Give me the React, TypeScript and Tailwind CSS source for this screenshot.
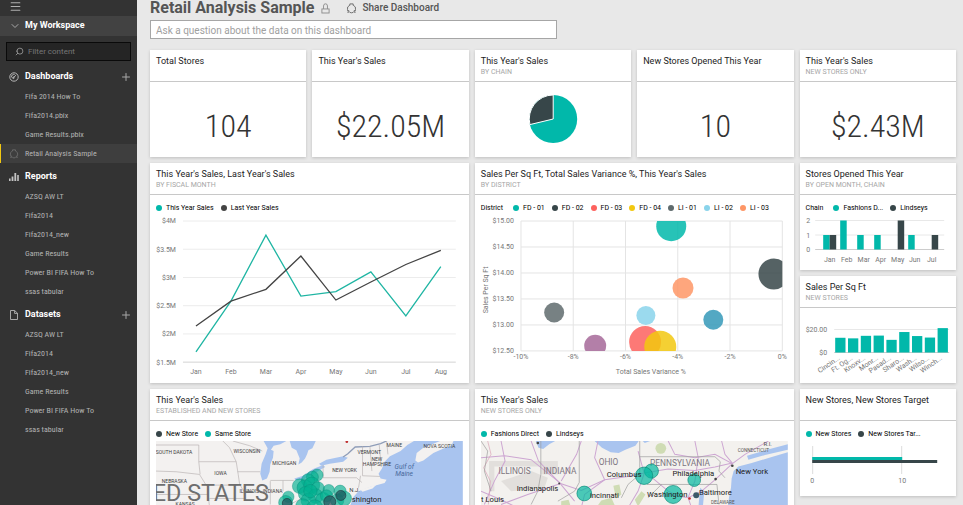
import type { ReactNode } from 'react';
import { ChevronDown, Menu, Plus, Search } from 'lucide-react';

const TEAL = '#01b8aa';
const DARK = '#374649';
const MONTHS = ['Jan', 'Feb', 'Mar', 'Apr', 'May', 'Jun', 'Jul', 'Aug'];

const REPORTS = ['AZSQ AW LT', 'Fifa2014', 'Fifa2014_new', 'Game Results', 'Power BI FIFA How To', 'ssas tabular'];
const DASHBOARDS = ['Fifa 2014 How To', 'Fifa2014.pbix', 'Game Results.pbix', 'Retail Analysis Sample'];

const THIS_YEAR = [1.68, 2.58, 3.75, 2.67, 2.75, 3.1, 2.32, 3.19];
const LAST_YEAR = [2.14, 2.58, 2.79, 3.38, 2.6, 2.92, 3.23, 3.48];

const BUBBLES = [
  { x: -4.25, y: 14.9, r: 15, color: '#01b8aa' },
  { x: -0.32, y: 13.98, r: 15.5, color: '#374649' },
  { x: -3.8, y: 13.71, r: 10.5, color: '#fe9666' },
  { x: -8.73, y: 13.24, r: 10, color: '#5f6b6d' },
  { x: -5.22, y: 13.18, r: 9.5, color: '#8ad4eb' },
  { x: -2.64, y: 13.1, r: 10, color: '#3599b8' },
  { x: -7.16, y: 12.6, r: 11, color: '#a66999' },
  { x: -5.25, y: 12.67, r: 16, color: '#fd625e' },
  { x: -4.67, y: 12.58, r: 16, color: '#f2c80f' },
];

const DISTRICTS = [
  { label: 'FD - 01', color: TEAL },
  { label: 'FD - 02', color: DARK },
  { label: 'FD - 03', color: '#fd625e' },
  { label: 'FD - 04', color: '#f2c80f' },
  { label: 'LI - 01', color: '#5f6b6d' },
  { label: 'LI - 02', color: '#8ad4eb' },
  { label: 'LI - 03', color: '#fe9666' },
];

const OPENED = [
  { direct: 1, lindseys: 1 },
  { direct: 2, lindseys: 0 },
  { direct: 1, lindseys: 0 },
  { direct: 1, lindseys: 0 },
  { direct: 0, lindseys: 2 },
  { direct: 1, lindseys: 0 },
  { direct: 0, lindseys: 1 },
];

const SQ_FT = [
  { label: 'Cincin...', value: 12.8 },
  { label: 'Ft. Og...', value: 12.3 },
  { label: 'Knoxv...', value: 14.5 },
  { label: 'Monr...', value: 14.7 },
  { label: 'Pasad...', value: 11 },
  { label: 'Sharo...', value: 17.8 },
  { label: 'Wash...', value: 14.3 },
  { label: 'Wilso...', value: 13 },
  { label: 'Winch...', value: 21.2 },
];

type LegendItem = { label: string; color: string };

function GaugeIcon() {
  return (
    <svg viewBox="0 0 10 10" className="w-[10px] h-[10px]" fill="none" stroke="#b5b5b5" strokeWidth="1">
      <circle cx="5" cy="5" r="4.2" />
      <path d="M4.2 5.8 L7 3.2 M2.4 5.4 A2.7 2.7 0 0 1 5.6 2.4" />
      <circle cx="4.4" cy="5.8" r="0.8" />
    </svg>
  );
}

function BarsIcon() {
  return (
    <svg viewBox="0 0 10 10" className="w-[10px] h-[10px]" fill="#c4c4c4">
      <rect x="0" y="6.5" width="1.6" height="2.5" />
      <rect x="2.6" y="4.5" width="1.8" height="4.5" />
      <rect x="5.4" y="1" width="1.8" height="8" />
      <rect x="8.2" y="3" width="1.6" height="6" />
    </svg>
  );
}

function FileIcon() {
  return (
    <svg viewBox="0 0 10 10" className="w-[10px] h-[10px]" fill="none" stroke="#b5b5b5" strokeWidth="0.9">
      <path d="M1.5 0.5 H5.6 L8.5 3.2 V9.5 H1.5 Z M5.6 0.5 V3.4 H8.5" />
    </svg>
  );
}

// ring broken by three small knobs
function ShareIcon({ className, color }: { className: string; color: string }) {
  return (
    <svg viewBox="0 0 12 12" className={className} fill="none" stroke={color} strokeWidth="1">
      <path d="M1.6 7.4 A4.5 4.5 0 0 1 4.2 2.3 M7.8 2.3 A4.5 4.5 0 0 1 10.4 7.4 M4 10.2 A4.5 4.5 0 0 0 8 10.2" />
      <path d="M4.2 2.6 V1 H7.8 V2.6" />
      <path d="M1.2 8 L3.2 8.4 V10 H1.4 M10.8 8 L8.8 8.4 V10 H10.6" />
    </svg>
  );
}

function LockIcon() {
  return (
    <svg viewBox="0 0 10 12" className="w-[9px] h-[11px]" fill="none" stroke="#8a8a8a" strokeWidth="1">
      <rect x="1" y="6.5" width="8" height="4.5" />
      <path d="M2.8 6.5 V3.2 A2.2 2.4 0 0 1 7.2 3.2 V6.5" />
    </svg>
  );
}

function NavSection({ title, icon, items, addable, active }: {
  title: string;
  icon: ReactNode;
  items: string[];
  addable?: boolean;
  active?: string;
}) {
  return (
    <section className="mb-1">
      <div className="h-5 flex items-center pl-[9px] pr-[5px]">
        <span className="w-4">{icon}</span>
        <h2 className="flex-1 text-[9px] font-bold text-white">{title}</h2>
        {addable ? (
          <button type="button" aria-label={`Add to ${title}`} className="text-[#a8a8a8]">
            <Plus size={12} strokeWidth={2} />
          </button>
        ) : null}
      </div>
      <ul className="text-[8px] text-[#b4b4b4] font-['Roboto_Condensed','Roboto',sans-serif]">
        {items.map((item) => (
          <li key={item}>
            <a
              href="#"
              className={
                item === active
                  ? 'h-[19px] flex items-center pl-2 border-l border-[#f2c811] bg-[#3e3e3e]'
                  : 'h-[19px] flex items-center pl-[25px]'
              }
            >
              {item === active ? (
                <span className="w-4">
                  <ShareIcon className="w-[10px] h-[10px]" color="#6e6e6e" />
                </span>
              ) : null}
              {item}
            </a>
          </li>
        ))}
      </ul>
    </section>
  );
}

function Sidebar() {
  return (
    <aside className="w-[137px] shrink-0 bg-[#333333] overflow-hidden">
      <button type="button" aria-label="Menu" className="h-4 pb-1 pl-[9px] flex items-center text-[#b0b0b0]">
        <Menu size={13} strokeWidth={2} />
      </button>
      <button type="button" className="w-full h-5 flex items-center pl-[9px] bg-[#424242] text-[9px] font-bold text-white">
        <span className="w-4 text-[#a8a8a8]">
          <ChevronDown size={12} strokeWidth={2} />
        </span>
        My Workspace
      </button>
      <label className="m-[6px] h-[19px] flex items-center gap-1 pl-2 bg-[#252525] border border-[#0a0a0a] text-[#a8a8a8]">
        <Search size={9} strokeWidth={2} className="-scale-x-100 shrink-0" />
        <input
          type="text"
          aria-label="Filter content"
          placeholder="Filter content"
          className="w-full min-w-0 bg-transparent text-[8px] text-white placeholder:text-[#777777] outline-none"
        />
      </label>
      <nav>
        <NavSection title="Dashboards" icon={<GaugeIcon />} items={DASHBOARDS} active="Retail Analysis Sample" addable />
        <NavSection title="Reports" icon={<BarsIcon />} items={REPORTS} />
        <NavSection title="Datasets" icon={<FileIcon />} items={REPORTS} addable />
      </nav>
    </aside>
  );
}

function Tile({ title, subtitle, className = '', children }: {
  title: string;
  subtitle?: string;
  className?: string;
  children: ReactNode;
}) {
  return (
    <article className={`bg-white shadow-[0_1px_3px_rgba(0,0,0,0.18)] flex flex-col min-w-0 overflow-hidden ${className}`}>
      <header className="h-8 shrink-0 px-[6px] pt-1 border-b border-[#c8c8c8]">
        <h2 className="text-[9px] leading-[14px] text-[#222222] whitespace-nowrap">{title}</h2>
        {subtitle ? <p className="text-[7px] leading-[9px] text-[#a6a6a6] whitespace-nowrap">{subtitle}</p> : null}
      </header>
      {children}
    </article>
  );
}

function Legend({ title, items }: { title?: string; items: LegendItem[] }) {
  return (
    <ul className="px-[6px] pt-[6px] h-[19px] shrink-0 flex items-center gap-[7px] text-[7px] leading-[12px] text-black whitespace-nowrap">
      {title ? <li className="mr-[3px]">{title}</li> : null}
      {items.map((item) => (
        <li key={item.label} className="flex items-center gap-1">
          <span className="w-[6px] h-[6px] rounded-full" style={{ backgroundColor: item.color }} />
          {item.label}
        </li>
      ))}
    </ul>
  );
}

function Kpi({ value }: { value: string }) {
  return (
    <div className="flex-1 flex items-center justify-center pt-3 text-[32px] leading-[34px] text-[#333333] font-light font-['Roboto_Condensed','Roboto',sans-serif]">
      {value}
    </div>
  );
}

function SalesPie() {
  return (
    <svg viewBox="0 0 156 75" className="w-full" role="img" aria-label="Sales by chain">
      <circle cx="78" cy="37" r="24" fill={TEAL} />
      <path d="M78 37 L54.7 42.6 A24 24 0 0 1 78 13 Z" fill={DARK} stroke="#ffffff" strokeWidth="1" />
    </svg>
  );
}

function SalesLines() {
  const px = (i: number) => 46 + i * 35;
  const py = (v: number) => 7 + (4 - v) * 56.5;
  const toPoints = (values: number[]) => values.map((v, i) => `${px(i)},${py(v)}`).join(' ');

  return (
    <svg viewBox="0 0 319 169" className="w-full" fontSize="7" fill="#777777">
      {[4, 3.5, 3, 2.5, 2, 1.5].map((v) => (
        <g key={v}>
          <path d={`M33 ${py(v)} H306`} stroke={v === 1.5 ? '#d4d4d4' : '#ececec'} strokeWidth="1" />
          <text x="26" y={py(v) + 2.5} textAnchor="end">{`$${v}M`}</text>
        </g>
      ))}
      <polyline points={toPoints(THIS_YEAR)} fill="none" stroke="#1fb5a3" strokeWidth="1.3" />
      <polyline points={toPoints(LAST_YEAR)} fill="none" stroke="#444444" strokeWidth="1.3" />
      {MONTHS.map((m, i) => (
        <text key={m} x={px(i)} y="160" textAnchor="middle">{m}</text>
      ))}
    </svg>
  );
}

function VarianceBubbles() {
  const px = (v: number) => 46 + (v + 10) * 26.15;
  const py = (v: number) => 7 + (15 - v) * 52;

  return (
    <svg viewBox="0 0 319 169" className="w-full" fontSize="7" fill="#777777">
      <clipPath id="plot">
        <rect x="46" y="7" width="261.5" height="130" />
      </clipPath>
      {[15, 14.5, 14, 13.5, 13, 12.5].map((v) => (
        <g key={v}>
          <path d={`M46 ${py(v)} H307.5`} stroke="#e4e4e4" />
          <text x="39" y={py(v) + 2.5} textAnchor="end">{`$${v.toFixed(2)}`}</text>
        </g>
      ))}
      {[-10, -8, -6, -4, -2, 0].map((v) => (
        <g key={v}>
          <path d={`M${px(v)} 7 V137`} stroke="#e4e4e4" />
          <text x={px(v)} y="145" textAnchor="middle">{`${v}%`}</text>
        </g>
      ))}
      <g clipPath="url(#plot)">
        {BUBBLES.map((b) => (
          <circle key={b.color} cx={px(b.x)} cy={py(b.y)} r={b.r} fill={b.color} fillOpacity="0.85" />
        ))}
      </g>
      <text x="176" y="160" textAnchor="middle">Total Sales Variance %</text>
      <text transform="translate(13 76) rotate(-90)" textAnchor="middle">Sales Per Sq Ft</text>
    </svg>
  );
}

function OpenedBars() {
  const py = (v: number) => 35.5 - v * 14.5;

  return (
    <svg viewBox="0 0 156 56" className="w-full" fontSize="7" fill="#777777">
      {[2, 1, 0].map((v) => (
        <g key={v}>
          <path d={`M15 ${py(v)} H144`} stroke={v === 0 ? '#cccccc' : '#e8e8e8'} />
          <text x="6" y={py(v) + 2.5}>{v}</text>
        </g>
      ))}
      {OPENED.map((m, i) => (
        <g key={MONTHS[i]}>
          <rect x={23 + i * 17} y={py(m.direct)} width="6.5" height={m.direct * 14.5} fill={TEAL} />
          <rect x={29.5 + i * 17} y={py(m.lindseys)} width="6.5" height={m.lindseys * 14.5} fill={DARK} />
          <text x={29.5 + i * 17} y="48" textAnchor="middle">{MONTHS[i]}</text>
        </g>
      ))}
    </svg>
  );
}

function SqFtBars() {
  return (
    <svg viewBox="0 0 156 75" className="w-full" fontSize="7" fill="#777777">
      <path d="M34 21.5 H149" stroke="#e8e8e8" />
      <path d="M34 44.5 H149" stroke="#cccccc" />
      <text x="27" y="24" textAnchor="end">$20.00</text>
      <text x="27" y="47" textAnchor="end">$0</text>
      {SQ_FT.map((s, i) => (
        <g key={s.label}>
          <rect x={35 + i * 12.8} y={44.5 - s.value * 1.15} width="10.3" height={s.value * 1.15} fill={TEAL} />
          <text transform={`translate(${40 + i * 12.8} 51) rotate(-35)`} textAnchor="end">{s.label}</text>
        </g>
      ))}
    </svg>
  );
}

function TargetBars() {
  return (
    <svg viewBox="0 0 156 56" className="w-full" fontSize="7" fill="#777777">
      <path d="M12.5 6 V34 M101.5 6 V34" stroke="#dcdcdc" />
      <rect x="12" y="17" width="90" height="3" fill={TEAL} />
      <rect x="12" y="20" width="125" height="3" fill={DARK} />
      <text x="12" y="43" textAnchor="middle">0</text>
      <text x="102" y="43" textAnchor="middle">10</text>
    </svg>
  );
}

const EAST_BUBBLES = [
  [482, 102, 18], [468, 108, 18], [455, 118, 20], [430, 135, 22], [446, 140, 24], [466, 132, 24], [484, 142, 20],
  [448, 158, 22], [478, 165, 22], [456, 178, 22], [517, 147, 17], [551, 150, 18], [500, 176, 22], [542, 178, 20],
  [563, 172, 22], [396, 167, 17], [388, 184, 21], [440, 195, 22], [475, 200, 24], [462, 150, 20], [510, 164, 18],
];

const EAST_LABELS: [number, number, string][] = [
  [54, 40, 'SOUTH DAKOTA'],
  [272, 36, 'WISCONSIN'],
  [384, 73, 'MICHIGAN'],
  [193, 103, 'IOWA'],
  [55, 126, 'NEBRASKA'],
  [279, 156, 'ILLINOIS'],
  [349, 156, 'INDIANA'],
  [564, 92, 'NEW YORK'],
  [638, 40, 'VERMONT'],
  [713, 18, 'MAINE'],
  [661, 61, 'NEW'],
  [661, 76, 'HAMPSHIRE'],
  [848, 21, 'NOVA SCOTIA'],
  [87, 195, 'KANSAS'],
];

function EastMap() {
  return (
    <svg viewBox="0 0 918 480" className="mx-[6px] mt-px" role="img" aria-label="Map of established and new stores">
      <rect width="918" height="480" fill="#f3f1f0" />
      <g fill="#a9c4ef">
        <path d="M322 0 H390 L372 10 L352 14 L344 26 L352 30 L350 50 L342 70 L340 92 L332 112 L318 118 L312 98 L316 68 L328 40 L334 22 Z" />
        <path d="M400 0 H478 L468 22 L456 28 L452 40 L446 52 L436 64 L426 70 L430 52 L420 28 L406 20 Z" />
        <path d="M414 112 L440 104 L470 84 L500 72 L506 78 L476 96 L440 116 L418 118 Z" />
        <path d="M488 68 L510 56 L560 46 L574 50 L560 62 L520 68 L494 74 Z" />
        <path d="M918 0 V480 H590 L582 240 L580 196 L590 168 L606 150 L640 138 L684 126 L690 116 L672 112 L666 98 L676 82 L684 62 L700 46 L732 30 L752 12 L772 0 Z" />
      </g>
      <path d="M776 58 L780 36 L800 20 L830 8 L850 0 H890 L884 14 L862 22 L830 36 L800 58 L784 64 Z" fill="#f3f1f0" />
      <path d="M612 146 L660 130 L648 142 L618 152 Z" fill="#f3f1f0" />
      <path d="M560 48 L574 38 L596 18 L640 16 L672 8 L690 0" fill="none" stroke="#8f9db8" strokeWidth="4" />
      <path
        d="M0 12 H128 V62 H240 L246 100 L250 128 L262 150 M0 90 L60 92 L130 100 L150 132 H246 M128 62 L132 100 M0 160 H156 L160 196 M160 172 H268 M244 92 H312 M200 0 L220 20 L240 62 M230 0 L280 14 L318 30 M342 120 V190 M380 118 V150 M342 118 H412 M380 200 L440 170 M500 72 V110 H600 L616 124 M618 16 V104 L670 106 M640 16 L646 90 M668 12 L674 78 M612 104 L606 140 M690 0 L694 40"
        fill="none"
        stroke="#b9b3b3"
        strokeWidth="2"
      />
      <g fontSize="15" fill="#3c3c3c" textAnchor="middle">
        {EAST_LABELS.map(([x, y, label]) => (
          <text key={label} x={x} y={y}>{label}</text>
        ))}
      </g>
      <g fontSize="20" fontStyle="italic" fill="#4a6a9c">
        <text x="714" y="84">Gulf of</text>
        <text x="716" y="104">Maine</text>
      </g>
      <text x="338" y="181" textAnchor="end" fontSize="70" fill="#6e6e6e">ED STATES</text>
      <g fill="#01b090" fillOpacity="0.65" stroke="#0a8a78" strokeOpacity="0.6" strokeWidth="2">
        {EAST_BUBBLES.map(([x, y, r]) => (
          <circle key={`${x}-${y}`} cx={x} cy={y} r={r} />
        ))}
      </g>
      <g fill="#24505a" fillOpacity="0.7" stroke="#1c3b40" strokeWidth="2">
        <circle cx="520" cy="182" r="18" />
        <circle cx="553" cy="163" r="15" />
        <circle cx="392" cy="186" r="14" />
      </g>
      <text x="578" y="154" fontSize="18" fill="#444444">N.J.</text>
      <text x="586" y="182" fontSize="23" fill="#222222">shington</text>
      <circle cx="571" cy="2" r="4" fill="#c03030" />
    </svg>
  );
}

function OhioMap() {
  return (
    <svg viewBox="0 0 918 480" className="mx-[6px] mt-px" role="img" aria-label="Map of new stores">
      <rect width="918" height="480" fill="#f3f1ee" />
      <g fill="#e2dfdc">
        <path d="M24 60 H180 V76 H40 V150 H24 Z" />
        <path d="M60 120 L150 90 L200 110 L190 140 L90 150 Z" />
        <rect x="180" y="60" width="50" height="40" />
      </g>
      <g fill="#cfdcb4">
        <circle cx="538" cy="22" r="16" />
        <path d="M396 134 L414 130 L420 160 L404 172 Z" />
        <path d="M360 178 L390 170 L400 192 H350 Z" />
        <path d="M460 176 L480 150 L492 160 L470 196 Z" />
        <path d="M240 180 L262 176 L270 200 H240 Z" />
      </g>
      <g fill="#a9c4ef">
        <path d="M164 0 H222 L204 10 L186 24 L172 20 Z" />
        <path d="M340 0 H472 L462 14 L432 26 L412 36 L388 34 L362 20 Z" />
        <path d="M484 0 H506 L490 6 Z" />
        <path d="M918 34 L870 48 L810 66 L770 76 L756 90 L750 112 L748 140 L742 170 L738 200 L740 480 H918 Z" />
        <path d="M796 44 L850 28 L918 10 V26 L850 42 L800 56 Z" />
        <path d="M656 140 L668 152 L664 196 L672 240 H648 L652 180 Z" />
      </g>
      <g fill="none" stroke="#cda6d2" strokeWidth="3">
        <path d="M0 50 L70 44 L150 56 L240 128 L300 148 L370 116 L440 106 L488 96 L560 84 L640 88 L700 78 L752 66" />
        <path d="M60 0 L72 60 L40 120 L10 190 M150 0 L172 60 L236 126 L280 180 M236 128 L140 160 L60 190" />
        <path d="M300 0 L286 40 L240 120 M370 116 L340 50 L350 0 M370 116 L310 160 L300 200 M488 96 L470 30 M488 98 L470 150 L440 200" />
        <path d="M560 0 L580 40 L640 50 L700 40 L752 68 L790 40 L860 0 M752 68 L700 116 L660 150 L620 170 L560 160 M620 170 L630 200" />
        <path d="M640 0 L650 50 L640 120 L620 168 M720 0 L730 40 L752 66 M500 100 L560 150 L600 168 M0 150 L60 176 L110 200" />
      </g>
      <path d="M20 0 L30 40 L8 80 L28 120 L22 190" fill="none" stroke="#d9a0b4" strokeWidth="2" />
      <path
        d="M179 0 V100 L170 150 L150 190 M294 0 V124 L280 150 L230 180 M0 0 L20 30 L10 90 L30 150 M475 0 V100 L440 130 L420 170 M475 47 H700 L716 62 L712 90 L730 110 M497 130 H706 L712 190 M540 130 L500 170"
        fill="none"
        stroke="#9a9a9a"
        strokeWidth="2"
      />
      <g fontSize="25" fill="#7d7680">
        <text x="52" y="98">ILLINOIS</text>
        <text x="187" y="98">INDIANA</text>
        <text x="352" y="72">OHIO</text>
        <text x="506" y="74">PENNSYLVANIA</text>
      </g>
      <g fontSize="14" fill="#555555">
        <text x="845" y="16" fontSize="18">R.I.</text>
        <text x="768" y="34">CONNECTICUT</text>
        <text x="688" y="188">DELAWARE</text>
      </g>
      <g fill="#01b8a0" fillOpacity="0.7" stroke="#0a8a78" strokeWidth="2">
        <circle cx="510" cy="90" r="21" />
        <circle cx="488" cy="104" r="26" />
        <circle cx="638" cy="117" r="19" />
        <circle cx="309" cy="157" r="22" />
        <circle cx="575" cy="160" r="27" />
      </g>
      <circle cx="644" cy="162" r="9" fill="#3c5a68" />
      <g fontSize="23" fill="#222222">
        <text x="376" y="107">Columbus</text>
        <text x="573" y="106">Philadelphia</text>
        <text x="762" y="100">New York</text>
        <text x="107" y="151">Indianapolis</text>
        <text x="326" y="171">incinnati</text>
        <text x="497" y="167">Washington</text>
        <text x="652" y="162">Baltimore</text>
        <text x="0" y="184">t Louis</text>
      </g>
      <g fill="#444444">
        <circle cx="170" cy="6" r="4" />
        <circle cx="234" cy="127" r="3" />
        <circle cx="752" cy="74" r="4" />
        <circle cx="702" cy="114" r="4" />
        <circle cx="624" cy="172" r="4" fill="#d02a2a" />
      </g>
    </svg>
  );
}

export default function App() {
  return (
    <div className="flex h-screen overflow-hidden bg-[#e8e8e8] font-['Roboto','Open_Sans',sans-serif]">
      <Sidebar />
      <main className="flex-1 min-w-0 pl-[13px] pr-[7px]">
        <div className="h-5 flex items-center pb-1">
          <h1 className="text-[16px] leading-[16px] font-bold text-[#555555]">Retail Analysis Sample</h1>
          <span className="ml-[7px]">
            <LockIcon />
          </span>
          <button type="button" className="ml-4 flex items-center gap-[5px] text-[10px] leading-[14px] font-medium text-[#555555]">
            <ShareIcon className="w-[11px] h-[11px]" color="#666666" />
            Share Dashboard
          </button>
        </div>
        <input
          type="text"
          aria-label="Ask a question about the data on this dashboard"
          placeholder="Ask a question about the data on this dashboard"
          className="block w-full max-w-[407px] h-[19px] pt-[2px] px-[5px] bg-white border border-[#a6a6a6] text-[10px] placeholder:text-[#a0a0a0] outline-none"
        />
        <div className="mt-[11px] grid grid-cols-5 auto-rows-[107px] gap-[6px]">
          <Tile title="Total Stores">
            <Kpi value="104" />
          </Tile>
          <Tile title="This Year's Sales">
            <Kpi value="$22.05M" />
          </Tile>
          <Tile title="This Year's Sales" subtitle="BY CHAIN">
            <SalesPie />
          </Tile>
          <Tile title="New Stores Opened This Year">
            <Kpi value="10" />
          </Tile>
          <Tile title="This Year's Sales" subtitle="NEW STORES ONLY">
            <Kpi value="$2.43M" />
          </Tile>

          <Tile title="This Year's Sales, Last Year's Sales" subtitle="BY FISCAL MONTH" className="col-span-2 row-span-2">
            <Legend items={[{ label: 'This Year Sales', color: TEAL }, { label: 'Last Year Sales', color: '#444444' }]} />
            <SalesLines />
          </Tile>
          <Tile
            title="Sales Per Sq Ft, Total Sales Variance %, This Year's Sales"
            subtitle="BY DISTRICT"
            className="col-span-2 row-span-2"
          >
            <Legend title="District" items={DISTRICTS} />
            <VarianceBubbles />
          </Tile>
          <Tile title="Stores Opened This Year" subtitle="BY OPEN MONTH, CHAIN">
            <Legend title="Chain" items={[{ label: 'Fashions D...', color: TEAL }, { label: 'Lindseys', color: DARK }]} />
            <OpenedBars />
          </Tile>
          <Tile title="Sales Per Sq Ft" subtitle="NEW STORES">
            <SqFtBars />
          </Tile>

          <Tile title="This Year's Sales" subtitle="ESTABLISHED AND NEW STORES" className="col-span-2 row-span-2">
            <Legend items={[{ label: 'New Store', color: DARK }, { label: 'Same Store', color: TEAL }]} />
            <EastMap />
          </Tile>
          <Tile title="This Year's Sales" subtitle="NEW STORES ONLY" className="col-span-2 row-span-2">
            <Legend items={[{ label: 'Fashions Direct', color: TEAL }, { label: 'Lindseys', color: DARK }]} />
            <OhioMap />
          </Tile>
          <Tile title="New Stores, New Stores Target">
            <Legend items={[{ label: 'New Stores', color: TEAL }, { label: 'New Stores Tar...', color: DARK }]} />
            <TargetBars />
          </Tile>
        </div>
      </main>
    </div>
  );
}
